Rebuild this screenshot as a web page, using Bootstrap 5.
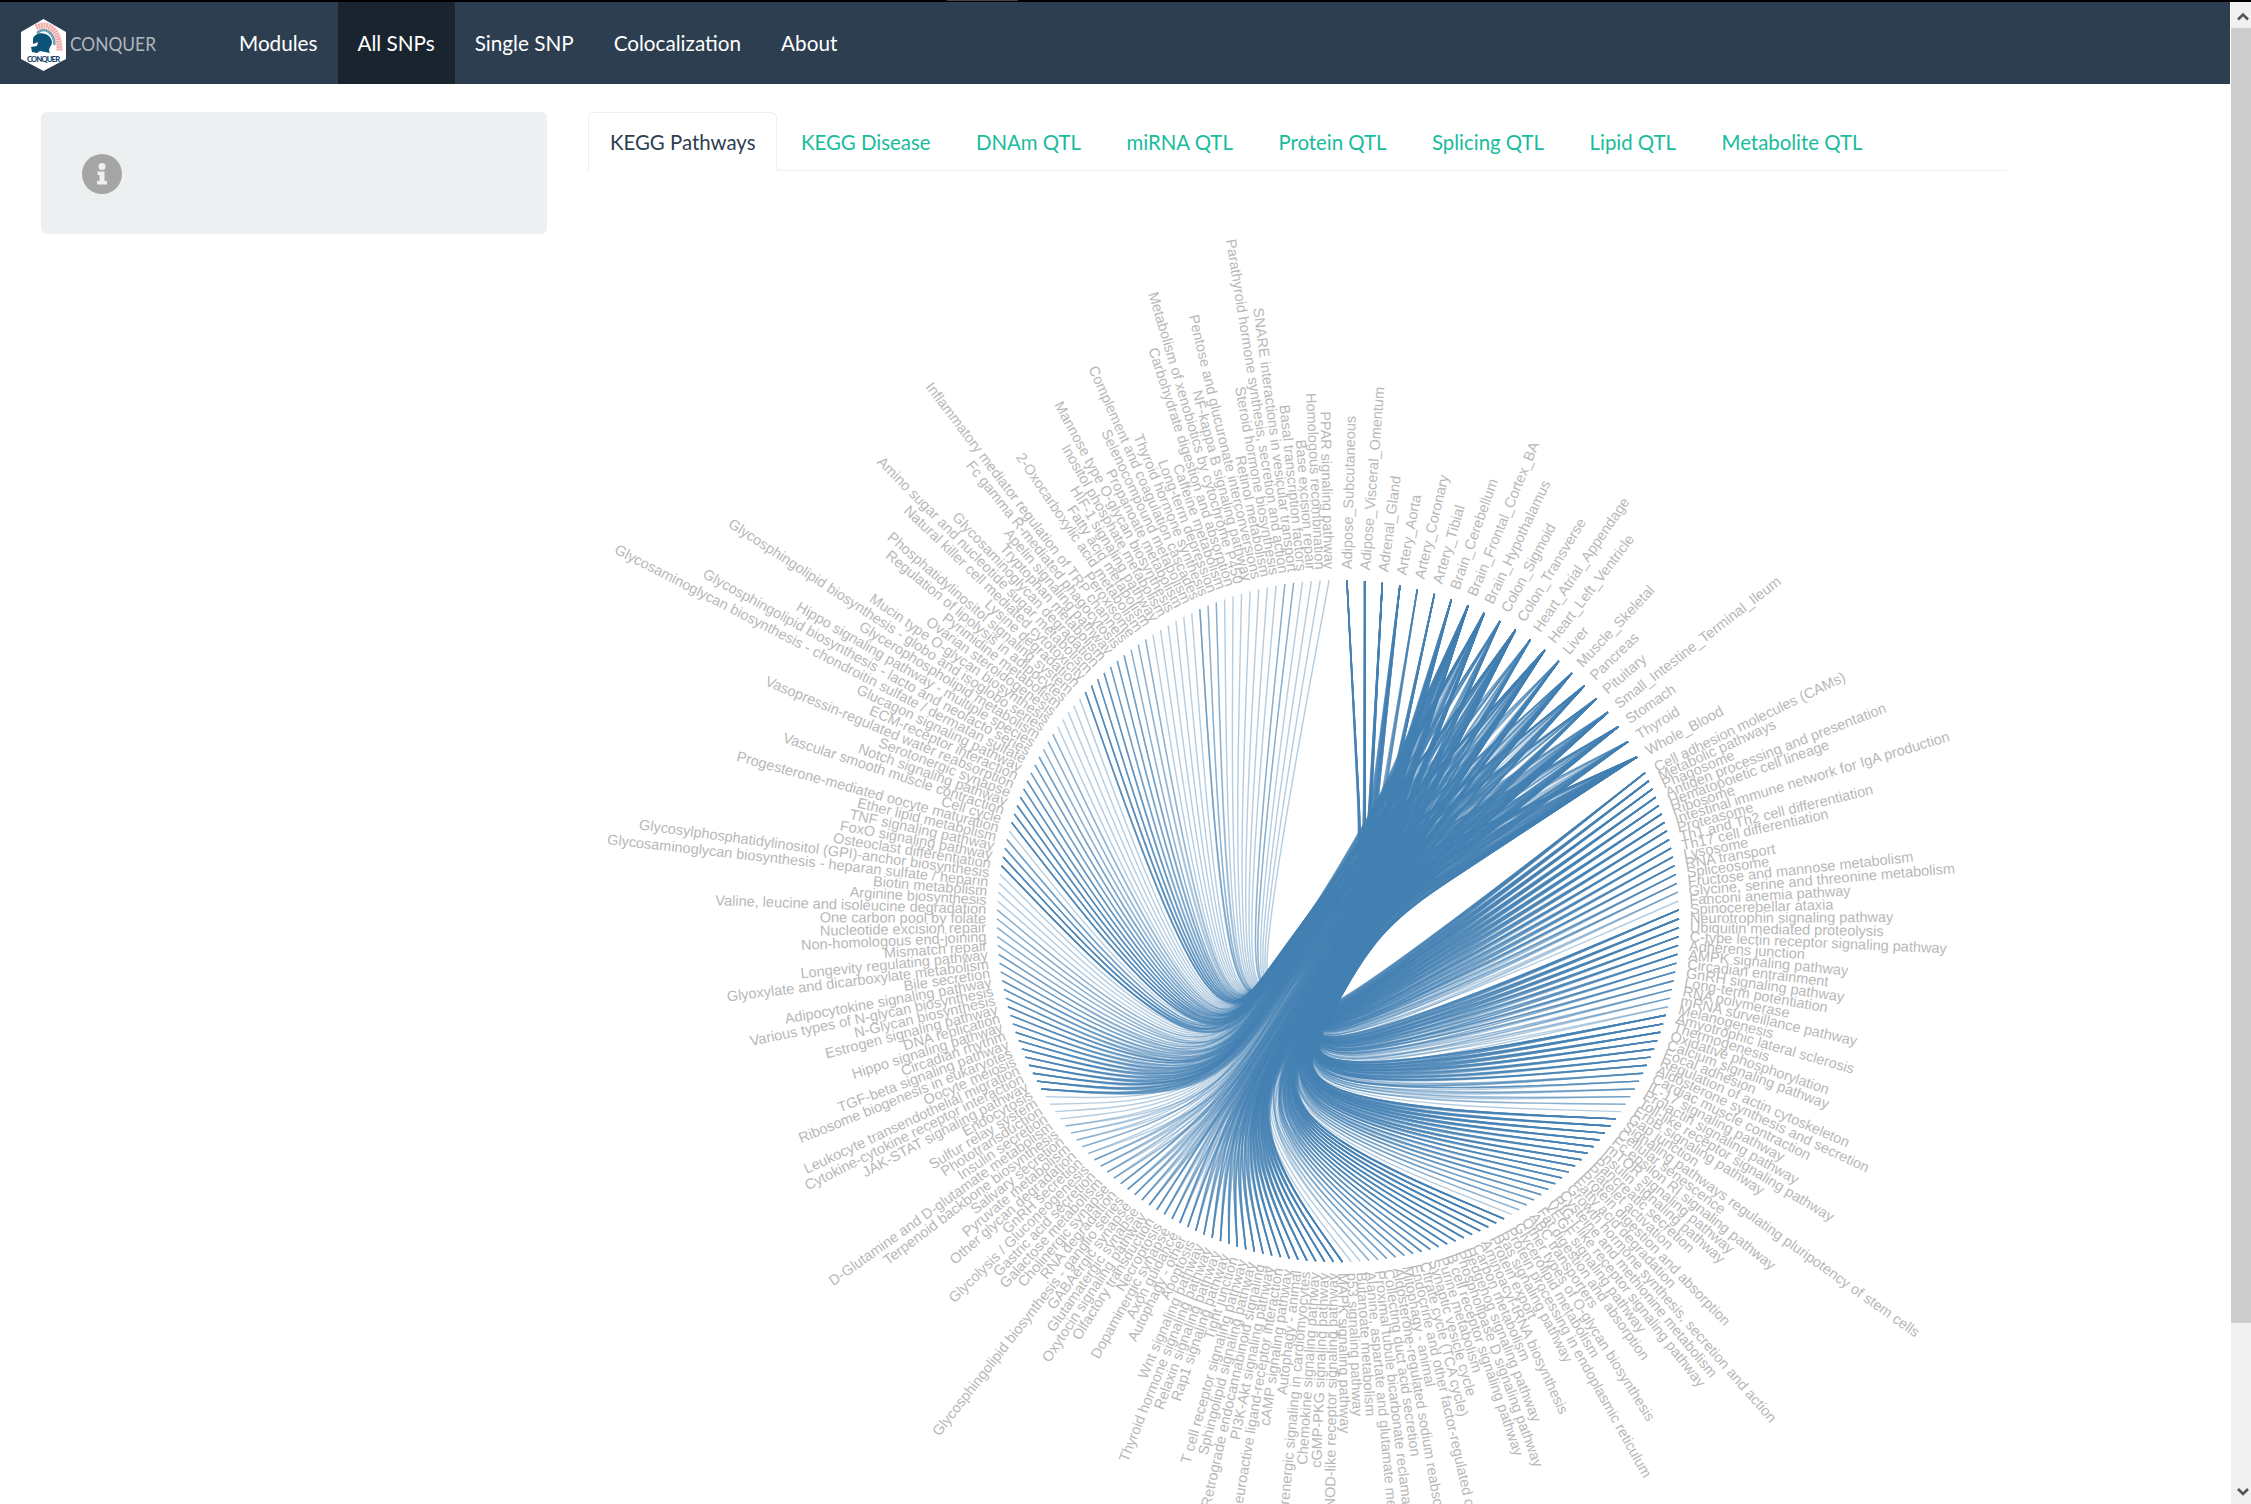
<!DOCTYPE html>
<html lang="en">
<head>
<meta charset="utf-8">
<title>CONQUER</title>
<link href="https://cdn.jsdelivr.net/npm/bootstrap@5.3.0/dist/css/bootstrap.min.css" rel="stylesheet">
<style>
html, body { height: 100%; overflow: hidden; }
body { font-family: Lato, sans-serif; font-size: 20px; color: #2c3e50; background: #fff; }
.window-edge { height: 2px; background: #000; }
.window-edge span { display: block; width: 71px; height: 1px; margin-left: 947px; background: #444; }
.viewport-row { height: 1502px; }
.page-area { width: 2230px; overflow: hidden; }
.top-nav { height: 82px; background: #2c3e50; padding: 0 0 0 20px; }
.brand-box { width: 199px; padding-top: 3px; }
.brand-box svg { display: block; }
.top-nav .nav-link { color: #fff; font-size: 20.7px; height: 82px; padding: 0 20px; line-height: 82px; white-space: nowrap; }
.top-nav .nav-link.active { background: #1a242f; }
.content-row { padding: 28px 0 0 41px; gap: 41px; }
.side-well { width: 506px; height: 122px; background: #ecf0f1; border-radius: 6px; padding: 42px 0 0 41px; }
.main-col { width: 1419px; }
.nav-tabs { --bs-nav-tabs-border-color: #ecf0f1; border-bottom: 1px solid #ecf0f1; height: 59px; }
.nav-tabs .nav-link { color: #18bc9c; font-size: 20.4px; height: 59px; padding: 0 21px; line-height: 58px; margin-right: 1.5px; border-radius: 6px 6px 0 0; white-space: nowrap; }
.nav-tabs .nav-link.active { color: #2c3e50; border-color: #ecf0f1 #ecf0f1 #fff; }
#bundle { display: block; overflow: visible; }
#bundle text { font-family: "Liberation Sans", Arial, sans-serif; font-size: 14.53px; fill: #b8b8b8; }
#bundle path { fill: none; stroke: #4682b4; stroke-opacity: .4; stroke-width: 1.43px; }
.scroll-track { width: 20px; margin-left: 1px; background: #f0f0f0; }
.scroll-thumb { height: 1295px; background: #cdcdcd; }
.scroll-end { height: 26px; }
</style>
<script src="https://cdn.jsdelivr.net/npm/bootstrap@5.3.0/dist/js/bootstrap.bundle.min.js"></script>
</head>
<body>
<div class="window-edge"><span></span></div>
<div class="viewport-row d-flex">
  <div class="page-area">
    <nav class="top-nav d-flex align-items-center">
      <a class="brand-box" href="#" aria-label="CONQUER">
        <svg width="140" height="54" viewBox="0 0 140 54">
          <path d="M23.500 1 46 14v27L23.500 53 1 41V14z" fill="#fff"/>
          <path d="M16 9.500C28 3 40 12 39.500 33" fill="none" stroke="#f3aaa8" stroke-width="6" stroke-dasharray="2 .6"/>
          <path d="M17 15C25 8 34.500 15 34.500 27" fill="none" stroke="#6e9fb5" stroke-width="2.500"/>
          <path d="M13 21C15 13 30 13 32 24 32 29 27 30 30 35L20 33 17 35 12 34 11 29 17 28 18 24 13 26z" fill="#0b5478"/>
          <text x="7" y="44" font-family="Lato, sans-serif" font-size="7.500" font-weight="900" fill="#18466b" textLength="33">CONQUER</text>
          <text x="50" y="32.500" font-family="Lato, sans-serif" font-size="19.500" fill="#aeb6be" textLength="86" lengthAdjust="spacingAndGlyphs">CONQUER</text>
        </svg>
      </a>
      <div class="nav flex-nowrap">
        <a class="nav-link" href="#">Modules</a>
        <a class="nav-link active" href="#">All SNPs</a>
        <a class="nav-link" href="#">Single SNP</a>
        <a class="nav-link" href="#">Colocalization</a>
        <a class="nav-link" href="#">About</a>
      </div>
    </nav>
    <div class="content-row d-flex align-items-start">
      <aside class="side-well flex-shrink-0">
        <svg class="d-block" width="40" height="40" viewBox="0 0 40 40"><circle cx="20" cy="20" r="20" fill="#a5a5a5"/><circle cx="20" cy="12.500" r="3.500" fill="#ecf0f1"/><path d="M15.500 17.500h7v9.500h2.500v3.500h-10v-3.500h2.500v-6h-2z" fill="#ecf0f1"/></svg>
      </aside>
      <main class="main-col flex-shrink-0">
        <ul class="nav nav-tabs flex-nowrap">
          <li class="nav-item"><a class="nav-link active" href="#">KEGG Pathways</a></li>
          <li class="nav-item"><a class="nav-link" href="#">KEGG Disease</a></li>
          <li class="nav-item"><a class="nav-link" href="#">DNAm QTL</a></li>
          <li class="nav-item"><a class="nav-link" href="#">miRNA QTL</a></li>
          <li class="nav-item"><a class="nav-link" href="#">Protein QTL</a></li>
          <li class="nav-item"><a class="nav-link" href="#">Splicing QTL</a></li>
          <li class="nav-item"><a class="nav-link" href="#">Lipid QTL</a></li>
          <li class="nav-item"><a class="nav-link" href="#">Metabolite QTL</a></li>
        </ul>
        <svg id="bundle" width="1419" height="1333" viewBox="-750 -750 1419 1333"></svg>
      </main>
    </div>
  </div>
  <div class="scroll-track">
    <svg class="d-block scroll-end" width="20" height="26" viewBox="0 0 20 26"><path d="M7 17.500l5-5 5 5" fill="none" stroke="#555" stroke-width="2.600"/></svg>
    <div class="scroll-thumb"></div>
    <svg class="d-block" width="20" height="181" viewBox="0 0 20 181"><path d="M7 166l5 5 5-5" fill="none" stroke="#555" stroke-width="2.600"/></svg>
  </div>
</div>
<script>
const tissues = "Adipose_Subcutaneous|Adipose_Visceral_Omentum|Adrenal_Gland|Artery_Aorta|Artery_Coronary|Artery_Tibial|Brain_Cerebellum|Brain_Frontal_Cortex_BA|Brain_Hypothalamus|Colon_Sigmoid|Colon_Transverse|Heart_Atrial_Appendage|Heart_Left_Ventricle|Liver|Muscle_Skeletal|Pancreas|Pituitary|Small_Intestine_Terminal_Ileum|Stomach|Thyroid|Whole_Blood".split("|");
const pathways = `Cell adhesion molecules (CAMs)|Metabolic pathways|Phagosome|Antigen processing and presentation|Hematopoietic cell lineage|Ribosome|Intestinal immune network for IgA production|Proteasome|Th1 and Th2 cell differentiation|Th17 cell differentiation|Lysosome|RNA transport|Spliceosome|Fructose and mannose metabolism|Glycine, serine and threonine metabolism|Fanconi anemia pathway|Spinocerebellar ataxia|Neurotrophin signaling pathway|Ubiquitin mediated proteolysis|C-type lectin receptor signaling pathway|Adherens junction|AMPK signaling pathway|Circadian entrainment|GnRH signaling pathway|Long-term potentiation|RNA polymerase|mRNA surveillance pathway|Melanogenesis|Amyotrophic lateral sclerosis|Thermogenesis|Oxidative phosphorylation|Calcium signaling pathway|Focal adhesion|Regulation of actin cytoskeleton|Aldosterone synthesis and secretion|Cardiac muscle contraction|IL-17 signaling pathway|Prolactin signaling pathway|Toll-like receptor signaling pathway|ErbB signaling pathway|Gap junction|Signaling pathways regulating pluripotency of stem cells|Cellular senescence|Fc epsilon RI signaling pathway|mTOR signaling pathway|Insulin signaling pathway|Pancreatic secretion|Platelet activation|Protein digestion and absorption|Fatty acid degradation|Growth hormone synthesis, secretion and action|Cysteine and methionine metabolism|RIG-I-like receptor signaling pathway|VEGF signaling pathway|Fat digestion and absorption|ABC transporters|Other types of O-glycan biosynthesis|Glycerolipid metabolism|Protein processing in endoplasmic reticulum|Ras signaling pathway|Protein export|Aminoacyl-tRNA biosynthesis|Carbon metabolism|Hedgehog signaling pathway|Phospholipase D signaling pathway|B cell receptor signaling pathway|Purine metabolism|Synaptic vesicle cycle|Citrate cycle (TCA cycle)|Endocrine and other factor-regulated calcium reabsorption|Mitophagy - animal|Aldosterone-regulated sodium reabsorption|Collecting duct acid secretion|Proximal tubule bicarbonate reclamation|Alanine, aspartate and glutamate metabolism|Butanoate metabolism|p53 signaling pathway|MAPK signaling pathway|NOD-like receptor signaling pathway|cGMP-PKG signaling pathway|Chemokine signaling pathway|Adrenergic signaling in cardiomyocytes|Autophagy - animal|cAMP signaling pathway|Neuroactive ligand-receptor interaction|PI3K-Akt signaling pathway|Retrograde endocannabinoid signaling|Sphingolipid signaling pathway|T cell receptor signaling pathway|Tight junction|Rap1 signaling pathway|Relaxin signaling pathway|Thyroid hormone signaling pathway|Wnt signaling pathway|Apoptosis|Autophagy - other|Axon guidance|Dopaminergic synapse|Necroptosis|Olfactory transduction|Oxytocin signaling pathway|Glutamatergic synapse|GABAergic synapse|Glycosphingolipid biosynthesis - ganglio series|RNA degradation|Cholinergic synapse|Galactose metabolism|Gastric acid secretion|Glycolysis / Gluconeogenesis|GnRH secretion|Other glycan degradation|Pyruvate metabolism|Salivary secretion|Terpenoid backbone biosynthesis|D-Glutamine and D-glutamate metabolism|Insulin secretion|Phototransduction|Sulfur relay system|Endocytosis|JAK-STAT signaling pathway|Cytokine-cytokine receptor interaction|Leukocyte transendothelial migration|Oocyte meiosis|Ribosome biogenesis in eukaryotes|TGF-beta signaling pathway|Circadian rhythm|Hippo signaling pathway|DNA replication|Estrogen signaling pathway|N-Glycan biosynthesis|Various types of N-glycan biosynthesis|Adipocytokine signaling pathway|Bile secretion|Glyoxylate and dicarboxylate metabolism|Longevity regulating pathway|Mismatch repair|Non-homologous end-joining|Nucleotide excision repair|One carbon pool by folate|Valine, leucine and isoleucine degradation|Arginine biosynthesis|Biotin metabolism|Glycosaminoglycan biosynthesis - heparan sulfate / heparin|Glycosylphosphatidylinositol (GPI)-anchor biosynthesis|Osteoclast differentiation|FoxO signaling pathway|TNF signaling pathway|Ether lipid metabolism|Progesterone-mediated oocyte maturation|Cell cycle|Vascular smooth muscle contraction|Notch signaling pathway|Serotonergic synapse|Vasopressin-regulated water reabsorption|ECM-receptor interaction|Glucagon signaling pathway|Glycosaminoglycan biosynthesis - chondroitin sulfate / dermatan sulfate|Glycosphingolipid biosynthesis - lacto and neolacto series|Hippo signaling pathway - multiple species|Glycerophospholipid metabolism|Glycosphingolipid biosynthesis - globo and isoglobo series|Mucin type O-glycan biosynthesis|Ovarian steroidogenesis|Pyrimidine metabolism|Regulation of lipolysis in adipocytes|Phosphatidylinositol signaling system|Lysine degradation|Natural killer cell mediated cytotoxicity|Amino sugar and nucleotide sugar metabolism|Glycosaminoglycan degradation|Tryptophan metabolism|Apelin signaling pathway|Fc gamma R-mediated phagocytosis|Inflammatory mediator regulation of TRP channels|Peroxisome|2-Oxocarboxylic acid metabolism|Fatty acid metabolism|HIF-1 signaling pathway|Inositol phosphate metabolism|Mannose type O-glycan biosynthesis|Propanoate metabolism|Selenocompound metabolism|Complement and coagulation cascades|Thyroid hormone synthesis|Long-term depression|Caffeine metabolism|Carbohydrate digestion and absorption|Metabolism of xenobiotics by cytochrome P450|NF-kappa B signaling pathway|Pentose and glucuronate interconversions|Retinol metabolism|Steroid hormone biosynthesis|Parathyroid hormone synthesis, secretion and action|SNARE interactions in vesicular transport|Basal transcription factors|Base excision repair|Homologous recombination|PPAR signaling pathway`.split("|");

// Pathways are ordered by the first tissue they occur in:
// [first, last, tissue, most links, fewest links, falloff]
const groups = [
  [0, 15, 0, 20, 1, .8], [16, 27, 1, 14, 2, 1.1], [28, 40, 2, 14, 1, 1], [41, 57, 3, 13, 1, 1],
  [58, 76, 6, 11, 1, 1.2], [77, 117, 7, 11, 1, 1.2], [118, 143, 8, 9, 1, 1.5], [144, 148, 9, 7, 1, 1],
  [149, 165, 10, 6, 1, 1.7], [166, 181, 12, 5, 1, 1.9], [182, 191, 15, 3, 1, 5], [192, 193, 18, 2, 2, 1], [194, 197, 20, 1, 1, 1]
];
const weight = [1, 1, 1, 1, .25, .4, .5, 1.6, 1.2, .6, 1.4, .35, 1.3, .6, .7, .6, .5, 1.2, .7, .5, 1.8];
const R = 341, UNIT = 2 * Math.PI / 241, BETA = .85;
const tissueAngle = i => (2 * i + 1) * UNIT;
const pathAngle = i => (43 + i) * UNIT;
const parentAngle = 141.5 * UNIT;
const polar = (a, r) => [r * Math.sin(a), -r * Math.cos(a)];
let seed = 12345;
const rand = () => (seed = (seed * 1103515245 + 12345) % 2147483648) / 2147483648;

function curve(pts) {
  const n = pts.length - 1, a = pts[0], b = pts[n];
  const p = pts.map((q, i) => [0, 1].map(k => BETA * q[k] + (1 - BETA) * (a[k] + i / n * (b[k] - a[k]))));
  const f = v => v.map(x => x.toFixed(2)).join(",");
  const mix = (u, v, s) => [0, 1].map(k => u[k] * (1 - s) + v[k] * s);
  let d = "M" + f(p[0]) + "L" + f(mix(p[0], p[1], 1 / 6));
  for (let i = 1; i <= n; i++) {
    const u = p[i - 1], v = p[i], w = p[Math.min(n, i + 1)];
    d += "C" + f(mix(u, v, 1 / 3)) + " " + f(mix(u, v, 2 / 3)) + " " + f([0, 1].map(k => (u[k] + 4 * v[k] + w[k]) / 6));
  }
  return d + "L" + f(p[n]);
}
let out = "";
for (const [first, last, t0, most, least, fall] of groups)
  for (let i = first; i <= last; i++) {
    const s = (i - first) / Math.max(1, last - first);
    const count = Math.max(1, Math.min(21 - t0, Math.round(least + (most - least) * Math.pow(1 - s, fall))));
    const pool = [];
    for (let t = t0 + 1; t < 21; t++) pool.push([t, Math.pow(rand(), 1 / weight[t])]);
    pool.sort((x, y) => y[1] - x[1]);
    for (const t of [t0, ...pool.slice(0, count - 1).map(x => x[0])]) {
      const ta = tissueAngle(t);
      out += `<path d="${curve([polar(ta, R), polar(ta, R * 2 / 3), polar(ta, R / 3), [0, 0], polar(parentAngle, R / 3), polar(parentAngle, R * 2 / 3), polar(pathAngle(i), R)])}"/>`;
    }
  }
function label(name, a) {
  const deg = a * 180 / Math.PI, flip = deg >= 180;
  out += `<text dy=".31em" transform="rotate(${(deg - 90).toFixed(3)})translate(${R + 11},0)${flip ? "rotate(180)" : ""}" text-anchor="${flip ? "end" : "start"}">${name}</text>`;
}
tissues.forEach((n, i) => label(n, tissueAngle(i)));
pathways.forEach((n, i) => label(n, pathAngle(i)));
document.getElementById("bundle").innerHTML = out;
</script>
</body>
</html>
